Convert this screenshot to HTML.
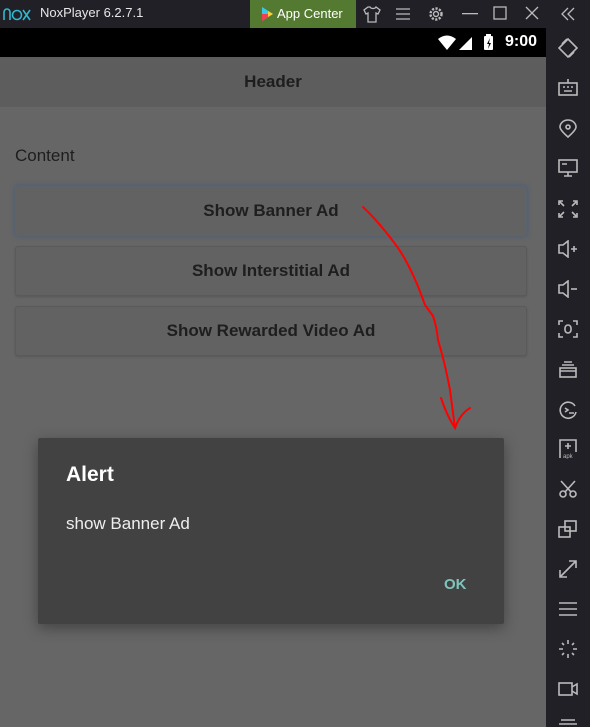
<!DOCTYPE html>
<html><head><meta charset="utf-8"><style>
*{margin:0;padding:0;box-sizing:border-box}
body{width:590px;height:727px;overflow:hidden;background:#202026;font-family:"Liberation Sans",Roboto,sans-serif;position:relative}
.abs{position:absolute}
#title{left:0;top:0;width:590px;height:28px;background:#202026}
#screen{left:0;top:28px;width:546px;height:699px;background:#666666;overflow:hidden}
#status{left:0;top:0;width:546px;height:29px;background:#000}
#header{left:0;top:29px;width:546px;height:50px;background:#5d5d5d;color:#1e1e1e;font-weight:bold;font-size:17px;text-align:center;line-height:50px}
.btn{position:absolute;left:15px;width:512px;height:50px;background:#626262;border:1px solid #5a5a5a;border-radius:3px;box-shadow:0 1px 2px rgba(0,0,0,.15);text-align:center;line-height:48px;font-weight:bold;font-size:17px;color:#1e1e1e}
#dlg{left:38px;top:410px;width:466px;height:186px;background:#424242;border-radius:2px;box-shadow:0 4px 14px rgba(0,0,0,.35)}
#side svg{position:absolute;left:558px}
</style></head><body>
<div id="title" class="abs">
<svg class="abs" style="left:3px;top:6px" width="28" height="16" viewBox="0 0 28 16" fill="none" stroke="#2fb8d0" stroke-width="1.6"><path d="M1 14V6a3 3 0 0 1 6 0v8"/><circle cx="14" cy="9" r="4.5"/><path d="M20 4l7 10M27 4l-7 10"/></svg>
<div class="abs" style="left:40px;top:5px;color:#e8e8e8;font-size:13px">NoxPlayer 6.2.7.1</div>
<div class="abs" style="left:250px;top:0;width:106px;height:28px;background:#547a32;color:#fff;font-size:13px;line-height:28px;padding-left:27px">App Center</div>
<svg class="abs" style="left:262px;top:7px" width="11" height="14" viewBox="0 0 11 14"><path d="M0 0L11 7L0 14Z" fill="#3bc8e8"/><path d="M0 7L11 7L0 14Z" fill="#f04050"/><path d="M6 4L11 7L6 10Z" fill="#ffd030"/></svg>
<svg class="abs" style="left:362px;top:5px" width="20" height="18" viewBox="0 0 20 18" fill="none" stroke="#bbb" stroke-width="1.3"><path d="M6 2L2 5l2 4 2-1v9h8V8l2 1 2-4-4-3c-1 2-5 2-6 0z"/></svg>
<svg class="abs" style="left:396px;top:7px" width="14" height="14" stroke="#bbb" stroke-width="1.3"><path d="M0 2h14M0 7h14M0 12h14"/></svg>
<svg class="abs" style="left:428px;top:6px" width="16" height="16" viewBox="0 0 16 16" fill="none" stroke="#bbb" stroke-width="1.4"><circle cx="8" cy="8" r="2.5"/><circle cx="8" cy="8" r="5.5" stroke-dasharray="2.2 1.4" stroke-width="2.4"/></svg>
<svg class="abs" style="left:462px;top:13px" width="16" height="2"><rect width="16" height="1.3" fill="#bbb"/></svg>
<svg class="abs" style="left:493px;top:6px" width="14" height="14" fill="none" stroke="#bbb" stroke-width="1.3"><rect x="1" y="1" width="12" height="12"/></svg>
<svg class="abs" style="left:525px;top:6px" width="14" height="14" stroke="#bbb" stroke-width="1.3"><path d="M1 1l12 12M13 1L1 13"/></svg>
<svg class="abs" style="left:561px;top:7px" width="14" height="14" fill="none" stroke="#bbb" stroke-width="1.3"><path d="M7 1L1 7l6 6M13 1L7 7l6 6"/></svg>
</div>
<div id="screen" class="abs">
<div id="status" class="abs">
<svg class="abs" style="left:438px;top:6px" width="62" height="18" viewBox="0 0 62 18"><path d="M0 5Q9 -2 18 5L9 16Z" fill="#fff"/><path d="M34 3V16H21Z" fill="#fff"/><rect x="46" y="2" width="9" height="14" rx="1" fill="#fff"/><rect x="48" y="0" width="5" height="3" fill="#fff"/><path d="M52 4l-3 6h2l-1 5 3-6h-2z" fill="#000"/></svg>
<div class="abs" style="left:505px;top:5px;color:#fff;font-size:16px;font-weight:bold">9:00</div>
</div>
<div id="header" class="abs">Header</div>
<div class="abs" style="left:15px;top:118px;font-size:17px;color:#1e1e1e">Content</div>
<div class="btn" style="top:158px;border-color:#5a6470;box-shadow:0 0 4px 1px rgba(60,90,130,.55)">Show Banner Ad</div>
<div class="btn" style="top:218px">Show Interstitial Ad</div>
<div class="btn" style="top:278px">Show Rewarded Video Ad</div>
<div id="dlg" class="abs">
<div class="abs" style="left:28px;top:25px;color:#fff;font-size:21px;font-weight:bold">Alert</div>
<div class="abs" style="left:28px;top:76px;color:#eee;font-size:17px">show Banner Ad</div>
<div class="abs" style="left:406px;top:138px;color:#7fc4bc;font-size:15px;font-weight:bold">OK</div>
</div>
<svg class="abs" style="left:0;top:0" width="546" height="699" fill="none" stroke="#f00" stroke-width="2" stroke-linecap="round"><path d="M363 179Q380 195 398 220Q412 240 425 277L433 288Q437 300 438 312Q445 335 450 362L455 400M441 370Q447 388 455 400Q460 386 470 380"/></svg>
</div>
<div id="side">
<svg style="top:38px" width="20" height="20" viewBox="0 0 20 20" fill="none" stroke="#bbb" stroke-width="1.6"><path d="M10 1L19 10L10 19L1 10Z"/><path d="M4 6l5-5M11 19l5-5"/></svg>
<svg style="top:79px" width="20" height="18" viewBox="0 0 20 18" fill="none" stroke="#bbb" stroke-width="1.6"><rect x="1" y="4" width="18" height="12"/><path d="M10 0v4M5 8h2M9 8h2M13 8h2M6 12h8"/></svg>
<svg style="top:119px" width="20" height="20" viewBox="0 0 20 20" fill="none" stroke="#bbb" stroke-width="1.6"><path d="M10 18Q2 11 2 8a8 7 0 0 1 16 0q0 3-8 10z"/><circle cx="10" cy="8" r="2"/></svg>
<svg style="top:159px" width="20" height="18" viewBox="0 0 20 18" fill="none" stroke="#bbb" stroke-width="1.6"><rect x="1" y="1" width="18" height="12"/><path d="M6 17h8M10 13v4M4 5h5"/></svg>
<svg style="top:200px" width="20" height="18" viewBox="0 0 20 18" fill="none" stroke="#bbb" stroke-width="1.6"><path d="M1 5V1h4M15 1h4v4M1 13v4h4M15 17h4v-4M2 2l4 4M18 2l-4 4M2 16l4-4M18 16l-4-4"/></svg>
<svg style="top:240px" width="20" height="18" viewBox="0 0 20 18" fill="none" stroke="#bbb" stroke-width="1.6"><path d="M1 5h4l5-4v16l-5-4H1z"/><path d="M13 9h6M16 6v6"/></svg>
<svg style="top:280px" width="20" height="18" viewBox="0 0 20 18" fill="none" stroke="#bbb" stroke-width="1.6"><path d="M1 5h4l5-4v16l-5-4H1z"/><path d="M13 9h6"/></svg>
<svg style="top:320px" width="20" height="18" viewBox="0 0 20 18" fill="none" stroke="#bbb" stroke-width="1.6"><path d="M1 5V1h4M15 1h4v4M1 13v4h4M15 17h4v-4"/><rect x="7" y="5" width="6" height="8" rx="3"/></svg>
<svg style="top:360px" width="20" height="18" viewBox="0 0 20 18" fill="none" stroke="#bbb" stroke-width="1.6"><rect x="2" y="8" width="16" height="9"/><path d="M4 5h12M6 2h8M2 11h16"/></svg>
<svg style="top:400px" width="20" height="20" viewBox="0 0 20 20" fill="none" stroke="#bbb" stroke-width="1.6"><path d="M17 6A8 8 0 1 0 18 12"/><path d="M7 8l3 2-3 2M11 13h5"/></svg>
<svg style="top:439px" width="20" height="20" viewBox="0 0 20 20" fill="none" stroke="#bbb" stroke-width="1.6"><path d="M2 19V1h16v12"/><path d="M10 4v6M7 7h6"/><text x="5" y="19" font-size="6" fill="#bbb" stroke="none" font-family="Liberation Sans">apk</text></svg>
<svg style="top:480px" width="20" height="18" viewBox="0 0 20 18" fill="none" stroke="#bbb" stroke-width="1.6"><circle cx="5" cy="14" r="3"/><circle cx="15" cy="14" r="3"/><path d="M7 12L17 1M13 12L3 1"/></svg>
<svg style="top:519px" width="20" height="20" viewBox="0 0 20 20" fill="none" stroke="#bbb" stroke-width="1.6"><rect x="1" y="8" width="11" height="10"/><rect x="7" y="2" width="11" height="10"/></svg>
<svg style="top:559px" width="20" height="20" viewBox="0 0 20 20" fill="none" stroke="#bbb" stroke-width="1.6"><path d="M2 18L18 2M11 2h7v7M2 11v7h7"/></svg>
<svg style="top:601px" width="20" height="16" stroke="#bbb" stroke-width="1.6"><path d="M1 2h18M1 8h18M1 14h18"/></svg>
<svg style="top:639px" width="20" height="20" viewBox="0 0 20 20" stroke="#bbb" stroke-width="1.6"><path d="M10 1v4M10 15v4M1 10h4M15 10h4M4 4l2 2M14 14l2 2M16 4l-2 2M4 16l2-2"/></svg>
<svg style="top:680px" width="20" height="18" viewBox="0 0 20 18" fill="none" stroke="#bbb" stroke-width="1.6"><rect x="1" y="3" width="13" height="12"/><path d="M14 7l5-3v10l-5-3"/></svg>
<svg style="top:719px" width="20" height="8" stroke="#bbb" stroke-width="1.6"><path d="M3 1h14M1 5h18"/></svg>
</div>
</body></html>
